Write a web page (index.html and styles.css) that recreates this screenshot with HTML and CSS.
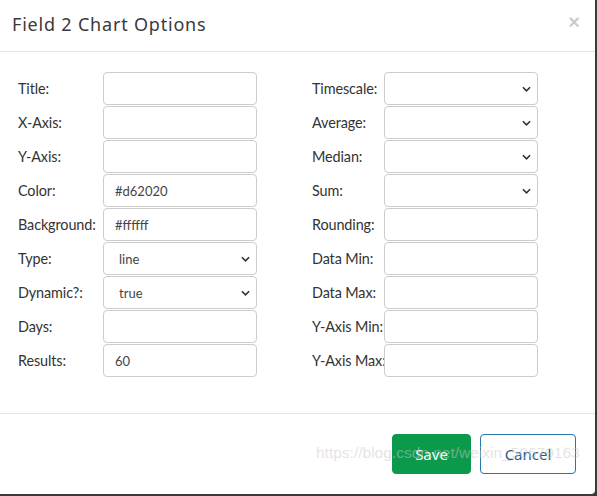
FILE: index.html
```html
<!DOCTYPE html>
<html>
<head>
<meta charset="utf-8">
<link rel="stylesheet" href="styles.css">
</head>
<body>
<div class="modal">
  <div class="modal-header">
    <h4 class="modal-title">Field 2 Chart Options</h4>
    <span class="close">&times;</span>
  </div>
  <div class="modal-body">
    <div class="col col-left">
      <div class="row"><label>Title:</label><input class="field" type="text"></div>
      <div class="row"><label>X-Axis:</label><input class="field" type="text"></div>
      <div class="row"><label>Y-Axis:</label><input class="field" type="text"></div>
      <div class="row"><label>Color:</label><input class="field" type="text" value="#d62020"></div>
      <div class="row"><label>Background:</label><input class="field" type="text" value="#ffffff"></div>
      <div class="row"><label>Type:</label><div class="sel"><select class="field"><option>line</option></select><svg class="chev" viewBox="0 0 10 6" width="9" height="6"><path d="M1 1 L5 5 L9 1" fill="none" stroke="#333" stroke-width="1.8"/></svg></div></div>
      <div class="row"><label>Dynamic?:</label><div class="sel"><select class="field"><option>true</option></select><svg class="chev" viewBox="0 0 10 6" width="9" height="6"><path d="M1 1 L5 5 L9 1" fill="none" stroke="#333" stroke-width="1.8"/></svg></div></div>
      <div class="row"><label>Days:</label><input class="field" type="text"></div>
      <div class="row"><label>Results:</label><input class="field" type="text" value="60"></div>
    </div>
    <div class="col col-right">
      <div class="row"><label>Timescale:</label><div class="sel"><select class="field"><option></option></select><svg class="chev" viewBox="0 0 10 6" width="9" height="6"><path d="M1 1 L5 5 L9 1" fill="none" stroke="#333" stroke-width="1.8"/></svg></div></div>
      <div class="row"><label>Average:</label><div class="sel"><select class="field"><option></option></select><svg class="chev" viewBox="0 0 10 6" width="9" height="6"><path d="M1 1 L5 5 L9 1" fill="none" stroke="#333" stroke-width="1.8"/></svg></div></div>
      <div class="row"><label>Median:</label><div class="sel"><select class="field"><option></option></select><svg class="chev" viewBox="0 0 10 6" width="9" height="6"><path d="M1 1 L5 5 L9 1" fill="none" stroke="#333" stroke-width="1.8"/></svg></div></div>
      <div class="row"><label>Sum:</label><div class="sel"><select class="field"><option></option></select><svg class="chev" viewBox="0 0 10 6" width="9" height="6"><path d="M1 1 L5 5 L9 1" fill="none" stroke="#333" stroke-width="1.8"/></svg></div></div>
      <div class="row"><label>Rounding:</label><input class="field" type="text"></div>
      <div class="row"><label>Data Min:</label><input class="field" type="text"></div>
      <div class="row"><label>Data Max:</label><input class="field" type="text"></div>
      <div class="row"><label>Y-Axis Min:</label><input class="field" type="text"></div>
      <div class="row"><label>Y-Axis Max:</label><input class="field" type="text"></div>
    </div>
  </div>
  <div class="modal-footer">
    <button class="btn btn-save">Save</button>
    <button class="btn btn-cancel">Cancel</button>
  </div>
  <div class="watermark">https://blog.csdn.net/weixin_50679163</div>
</div>
</body>
</html>
```
FILE: styles.css
```css
html, body {
  margin: 0;
  padding: 0;
  background: #3a3a3a;
}
body {
  width: 597px;
  height: 496px;
  overflow: hidden;
}
.modal {
  position: relative;
  width: 595px;
  height: 494px;
  background: #fff;
  border-radius: 0 0 4px 0;
  box-sizing: border-box;
  font-family: "Lato", "Open Sans", sans-serif;
  color: #333;
}
.modal-header {
  height: 52px;
  box-sizing: border-box;
  border-bottom: 1px solid #e5e5e5;
  display: flex;
  align-items: center;
  justify-content: space-between;
  padding: 0 15px 3px 12px;
}
.modal-title {
  margin: 0;
  font-family: "Noto Sans", sans-serif;
  font-weight: 400;
  font-size: 18px;
  letter-spacing: 0.8px;
  color: #3a3a3a;
}
.close {
  font-family: "Liberation Sans", sans-serif;
  font-size: 20px;
  font-weight: bold;
  color: #000;
  opacity: 0.2;
  line-height: 1;
  margin-top: -4px;
}
.modal-body {
  display: grid;
  grid-template-columns: 294px 1fr;
  padding: 20px 0 35px 18px;
}
.row {
  display: flex;
  align-items: center;
  height: 33px;
  margin-bottom: 1px;
}
.col-left label {
  width: 85px;
}
.col-right label {
  width: 72px;
}
label {
  font-size: 14.4px;
  color: #333;
  white-space: nowrap;
  flex: none;
  letter-spacing: -0.1px;
}
.field {
  width: 154px;
  height: 33px;
  box-sizing: border-box;
  border: 1px solid #ccc;
  border-radius: 4px;
  background: #fff;
  padding: 0 11px;
  font-family: "Lato", sans-serif;
  font-size: 13px;
  color: #444;
  outline: none;
  margin: 0;
}
.sel {
  position: relative;
  width: 154px;
  height: 33px;
}
select.field {
  -webkit-appearance: none;
  appearance: none;
  padding-left: 15px;
}
.chev {
  position: absolute;
  right: 7px;
  top: 14px;
}
.modal-footer {
  border-top: 1px solid #e5e5e5;
  display: flex;
  justify-content: flex-end;
  gap: 9px;
  padding: 20px 19px 0 0;
}
.btn {
  height: 40px;
  box-sizing: border-box;
  border-radius: 4px;
  font-family: "Noto Sans", sans-serif;
  font-size: 15px;
  margin: 0;
}
.btn-save {
  width: 79px;
  background: #0b9a4c;
  border: 1px solid #0b9a4c;
  color: #fff;
}
.btn-cancel {
  width: 96px;
  background: #fff;
  border: 1px solid #2677ab;
  color: #1f5a85;
}
.watermark {
  position: absolute;
  left: 316px;
  top: 444px;
  font-family: "Liberation Sans", sans-serif;
  font-size: 15.5px;
  color: rgba(200, 200, 200, 0.5);
  white-space: nowrap;
  pointer-events: none;
}
```
